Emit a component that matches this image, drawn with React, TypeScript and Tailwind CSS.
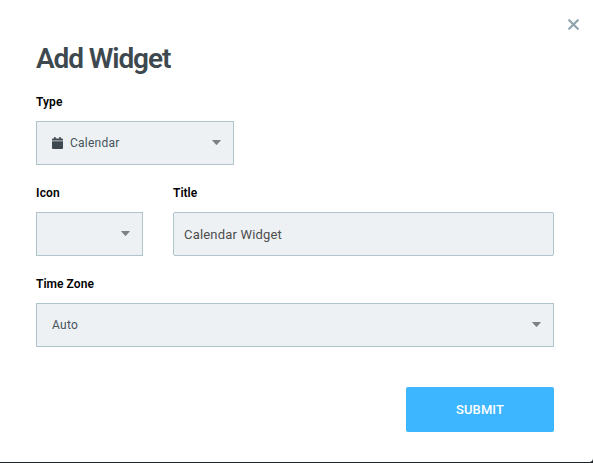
import React from "react";

function Caret() {
  return (
    <svg width="9" height="5" viewBox="0 0 9 5" className="mb-px shrink-0" fill="#808080">
      <path d="M0.300 0H8.700Q9 0.300 8.700 0.600L4.900 4.800Q4.500 5.100 4.100 4.800L0.300 0.600Q0 0.300 0.300 0Z" />
    </svg>
  );
}

function CalendarIcon() {
  return (
    <svg width="11" height="12" viewBox="0 0 11 12" className="mr-[7px] shrink-0" fill="#3d494e">
      <path d="M2.2 0h1.500v1.500h3.600V0h1.500v1.500h1.100A1.100 1.100 0 0 1 11 2.600v1H0v-1a1.100 1.100 0 0 1 1.100-1.100h1.100z" />
      <path d="M0 4.200h11v6.700a1.100 1.100 0 0 1-1.100 1.100H1.100A1.100 1.100 0 0 1 0 10.900z" />
    </svg>
  );
}

function Field({ label, spacing, className, children }: { label: string; spacing: string; className: string; children: React.ReactNode }) {
  return (
    <div className={className}>
      <div className="h-[27px] text-[12px] leading-4 font-semibold text-black">
        <span className={spacing}>{label}</span>
      </div>
      {children}
    </div>
  );
}

function Select({ children }: { children?: React.ReactNode }) {
  return (
    <button type="button" className="flex h-11 w-full items-center justify-between border border-[#b0c4cc] bg-[#edf1f4] pr-3 pl-[15px] text-[12px] leading-4 text-[#46545a]">
      <span className="flex items-center">{children}</span>
      <Caret />
    </button>
  );
}

export default function App() {
  return (
    <div className="h-[463px] w-[593px] bg-[#1f2428] pb-px font-['Roboto','Liberation_Sans',sans-serif]">
      <div className="flex h-full flex-col rounded-br-[4px] bg-white pr-[39px] pl-9">
        <div className="-mr-[25px] flex h-[43px] items-start justify-end pt-[19px]">
          <button type="button" aria-label="Close">
            <svg width="11" height="11" viewBox="0 0 11 11" fill="none" stroke="#90a4ae" strokeWidth="2.2" strokeLinecap="round">
              <path d="M1.200 1.200L9.800 9.800M9.800 1.200L1.200 9.800" />
            </svg>
          </button>
        </div>
        <h1 className="h-[51px] text-[28px] leading-8 font-semibold tracking-[-1.100px] text-[#3d494e]">Add Widget</h1>
        <Field label="Type" spacing="tracking-[0.1px]" className="h-[91px] w-[198px]">
          <Select>
            <CalendarIcon />
            <span className="tracking-[0.250px]">Calendar</span>
          </Select>
        </Field>
        <div className="flex h-[91px] gap-[30px]">
          <Field label="Icon" spacing="tracking-[0.2px]" className="w-[107px]">
            <Select />
          </Field>
          <Field label="Title" spacing="tracking-normal" className="flex-1">
            <input
              defaultValue="Calendar Widget"
              className="block h-11 w-full rounded-[2px] border border-[#b0c4cc] bg-[#edf1f4] px-2.5 text-[13px] tracking-[0.18px] text-[#4d4d4d] outline-none"
            />
          </Field>
        </div>
        <Field label="Time Zone" spacing="tracking-[0.05px]" className="h-[111px]">
          <Select>
            <span className="tracking-[0.3px]">Auto</span>
          </Select>
        </Field>
        <button type="button" className="h-[45px] w-[148px] self-end rounded-[2px] bg-[#3eb5ff] text-[13px] font-medium tracking-[0.1px] text-white">
          SUBMIT
        </button>
      </div>
    </div>
  );
}
